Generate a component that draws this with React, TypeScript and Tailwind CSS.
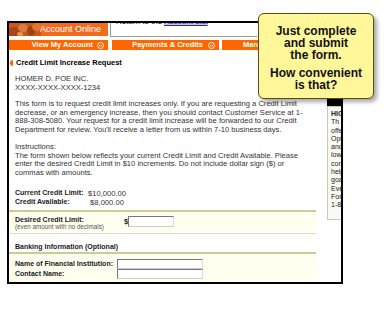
import React from 'react';

const CircleArrow = () => (
  <svg width="7" height="7" viewBox="0 0 7 7" className="shrink-0">
    <circle cx="3.5" cy="3.5" r="3" fill="none" stroke="#fff" strokeWidth="0.9" />
    <path d="M2 2.9 L3.5 4.4 L5 2.9" fill="none" stroke="#fff" strokeWidth="0.9" />
  </svg>
);

// little photo strip on the left of the orange header
const HeaderPhoto = () => (
  <svg width="32" height="13" viewBox="0 0 32 13" className="shrink-0">
    <rect width="32" height="13" fill="#c8581f" />
    <ellipse cx="5" cy="9" rx="6" ry="5" fill="#a8461a" />
    <ellipse cx="14" cy="5" rx="5" ry="4" fill="#e07a3c" />
    <ellipse cx="22" cy="8" rx="4" ry="5" fill="#9c4218" />
    <ellipse cx="28" cy="4" rx="5" ry="4" fill="#e8722a" />
    <ellipse cx="11" cy="11" rx="3" ry="2" fill="#f09050" />
  </svg>
);

const sideLines = ['Th', 'offe', 'Opt', 'and', 'low', 'con', 'help', 'goa', 'Eve', 'For', '1-8'];

const inputCls = 'bg-white border border-t-[#777] border-l-[#777] border-r-[#ddd] border-b-[#ccc]';

export default function App() {
  return (
    <div className="relative w-[392px] h-[323px] bg-white overflow-hidden pt-[21px] pl-[7px] font-['Liberation_Sans',Arial,sans-serif]">
      {/* cropped screenshot frame */}
      <div className="w-[336px] h-[263px] border-2 border-black overflow-hidden bg-white text-[#333]">
        {/* header */}
        <div className="flex h-[14px]">
          <div className="w-[99px] h-[13px] shrink-0 flex items-center bg-[#f26a1e]">
            <HeaderPhoto />
            <span className="ml-[-1px] text-[9px] leading-[9px] text-white whitespace-nowrap">Account Online</span>
          </div>
          <div className="ml-[2px] w-[147px] shrink-0 border-l border-b border-[#9a9a9a] overflow-hidden">
            <div className="-mt-[6px] pl-[5px] text-[8px] leading-[10px] text-black whitespace-nowrap">
              Return to the <span className="bg-[#c9c9f2] text-[#2a2aa8] underline">Account List</span>
            </div>
          </div>
        </div>

        {/* nav */}
        <div className="mt-[3px] flex h-[10px] text-[7.5px] font-bold text-white whitespace-nowrap">
          <div className="w-[99px] shrink-0 bg-[#ff6600] flex items-center justify-end gap-[4px] pr-[4px]">
            <span>View My Account</span>
            <CircleArrow />
          </div>
          <div className="ml-[4px] w-[107px] shrink-0 bg-[#ff6600] flex items-center justify-end gap-[5px] pr-[4px]">
            <span>Payments &amp; Credits</span>
            <CircleArrow />
          </div>
          <div className="ml-[3px] w-[36px] shrink-0 bg-[#ff6600] flex items-center pl-[21px] overflow-hidden">
            <span>Man</span>
          </div>
        </div>

        <div className="flex">
          {/* main column */}
          <div className="w-[307px] shrink-0 text-[7.6px] whitespace-nowrap">
            <div className="mt-[8px] flex items-center h-[9px] pl-[1px]">
              <span className="w-[3px] h-[6px] rounded-l-full bg-[#ff6600]" />
              <span className="ml-[3px] text-[7.5px] leading-[9px] font-bold text-black">Credit Limit Increase Request</span>
            </div>

            <div className="mt-[8px] pl-[6px] leading-[8.5px]">
              <div>HOMER D. POE INC.</div>
              <div>XXXX-XXXX-XXXX-1234</div>
            </div>

            <div className="mt-[8px] pl-[6px] leading-[8.5px]">
              <div>This form is to request credit limit increases only. If you are requesting a Credit Limit</div>
              <div>decrease, or an emergency increase, then you should contact Customer Service at 1-</div>
              <div>888-308-5080. Your request for a credit limit increase will be forwarded to our Credit</div>
              <div>Department for review. You'll receive a letter from us within 7-10 business days.</div>
            </div>

            <div className="mt-[9px] pl-[6px] leading-[8.5px]">
              <div>Instructions:</div>
              <div>The form shown below reflects your current Credit Limit and Credit Available. Please</div>
              <div>enter the desired Credit Limit in $10 increments. Do not include dollar sign ($) or</div>
              <div>commas with amounts.</div>
            </div>

            <div className="mt-[12px] pl-[6px]">
              <div className="flex h-[9px] items-center">
                <span className="w-[70px] text-[7px] font-bold text-[#222]">Current Credit Limit:</span>
                <span className="w-[44px] text-center">$10,000.00</span>
              </div>
              <div className="flex h-[9px] items-center">
                <span className="w-[70px] text-[7px] font-bold text-[#222]">Credit Available:</span>
                <span className="w-[44px] text-center">$8,000.00</span>
              </div>
            </div>

            {/* desired limit */}
            <div className="mt-[3px] h-[24px] border-t-2 border-b border-t-[#cbcb95] border-b-[#dcdcd4] bg-[#fffff0] flex items-start pt-[4px] pl-[6px]">
              <div className="w-[109px]">
                <div className="text-[7px] font-bold leading-[8px] text-[#222]">Desired Credit Limit:</div>
                <div className="text-[6.3px] leading-[6px] text-[#555]">(even amount with no decimals)</div>
              </div>
              <span className="font-bold leading-[11px] text-[#222]">$</span>
              <div className={`w-[46px] h-[11px] ${inputCls}`} />
            </div>

            {/* banking */}
            <div className="mt-[8px] pl-[6px] h-[9px] leading-[9px] text-[7px] font-bold text-[#222]">Banking Information (Optional)</div>
            <div className="mt-[1px] border-t-2 border-[#cbcb95] bg-[#fffff0] pt-[5px] pl-[6px] h-[40px] text-[7px] font-bold text-[#222]">
              <div className="flex h-[10px] items-center">
                <span className="w-[102px]">Name of Financial Institution:</span>
                <div className={`w-[86px] h-[10px] ${inputCls}`} />
              </div>
              <div className="flex h-[10px] items-center">
                <span className="w-[102px]">Contact Name:</span>
                <div className={`w-[86px] h-[10px] ${inputCls}`} />
              </div>
            </div>
          </div>

          {/* side panel, mostly cropped */}
          <div className="ml-[11px] w-[70px] shrink-0 mt-[47px]">
            <div className="h-[9px] bg-black" />
            <div className="border border-[#c8c8c8] bg-[#fafaf4] pl-[3px] pt-[3px] pb-[9px] text-[7px] leading-[8.3px] text-[#222] whitespace-nowrap">
              <div className="font-bold">HIGH</div>
              {sideLines.map((w) => (
                <div key={w}>{w}</div>
              ))}
            </div>
          </div>
        </div>
      </div>

      {/* callout */}
      <div className="absolute left-[258px] top-[13px] w-[116px] h-[86px] rounded-[6px] border border-[#5c4a12] bg-[#fff799] shadow-[3px_3px_4px_rgba(0,0,0,0.35)] pt-[11px] text-center text-[12px] leading-[12px] font-bold text-[#111]">
        <div>Just complete</div>
        <div>and submit</div>
        <div>the form.</div>
        <div className="mt-[6px]">How convenient</div>
        <div>is that?</div>
      </div>
    </div>
  );
}
